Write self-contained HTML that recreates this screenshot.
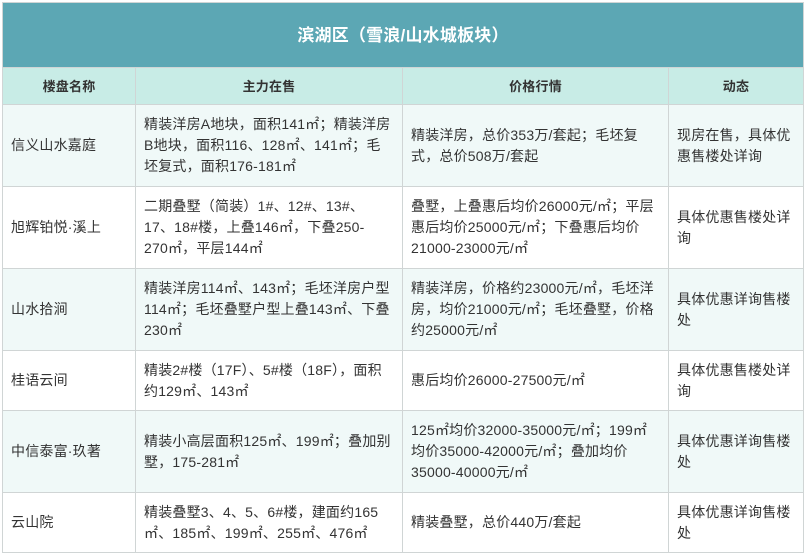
<!DOCTYPE html>
<html><head><meta charset="utf-8"><style>
body{margin:0;background:#fff;font-family:"Liberation Sans","Noto Sans CJK SC",sans-serif;}
table{position:absolute;left:2px;top:2px;width:801px;border-collapse:collapse;font-size:14px;color:#333;table-layout:fixed;}
td,th{border:1px solid #d0d5d5;padding:0 8px;line-height:21px;text-align:left;vertical-align:middle;letter-spacing:0.2px;white-space:nowrap;overflow:hidden;}
.title{background:#5ca7b4;color:#fff;font-size:17px;font-weight:bold;text-align:center;height:64px;padding:0;}
.hd th{background:#c8ece6;font-weight:bold;text-align:center;height:36px;color:#333;font-size:13px;}
tr.t td{background:#f0f9f8;}
</style></head><body>
<table>
<colgroup><col style="width:133px"><col style="width:267px"><col style="width:266px"><col style="width:135px"></colgroup>
<tr><td class="title" colspan="4">滨湖区（雪浪/山水城板块）</td></tr>
<tr class="hd"><th>楼盘名称</th><th>主力在售</th><th>价格行情</th><th>动态</th></tr>
<tr class="t" style="height:82px"><td>信义山水嘉庭</td><td>精装洋房A地块，面积141㎡；精装洋房<br>B地块，面积116、128㎡、141㎡；毛<br>坯复式，面积176-181㎡</td><td>精装洋房，总价353万/套起；毛坯复<br>式，总价508万/套起</td><td>现房在售，具体优<br>惠售楼处详询</td></tr>
<tr style="height:82px"><td>旭辉铂悦·溪上</td><td>二期叠墅（简装）1#、12#、13#、<br>17、18#楼，上叠146㎡，下叠250-<br>270㎡，平层144㎡</td><td>叠墅，上叠惠后均价26000元/㎡；平层<br>惠后均价25000元/㎡；下叠惠后均价<br>21000-23000元/㎡</td><td>具体优惠售楼处详<br>询</td></tr>
<tr class="t" style="height:82px"><td>山水拾涧</td><td>精装洋房114㎡、143㎡；毛坯洋房户型<br>114㎡；毛坯叠墅户型上叠143㎡、下叠<br>230㎡</td><td>精装洋房，价格约23000元/㎡，毛坯洋<br>房，均价21000元/㎡；毛坯叠墅，价格<br>约25000元/㎡</td><td>具体优惠详询售楼<br>处</td></tr>
<tr style="height:60px"><td>桂语云间</td><td>精装2#楼（17F）、5#楼（18F），面积<br>约129㎡、143㎡</td><td>惠后均价26000-27500元/㎡</td><td>具体优惠售楼处详<br>询</td></tr>
<tr class="t" style="height:82px"><td>中信泰富·玖著</td><td>精装小高层面积125㎡、199㎡；叠加别<br>墅，175-281㎡</td><td>125㎡均价32000-35000元/㎡；199㎡<br>均价35000-42000元/㎡；叠加均价<br>35000-40000元/㎡</td><td>具体优惠详询售楼<br>处</td></tr>
<tr style="height:60px"><td>云山院</td><td>精装叠墅3、4、5、6#楼，建面约165<br>㎡、185㎡、199㎡、255㎡、476㎡</td><td>精装叠墅，总价440万/套起</td><td>具体优惠详询售楼<br>处</td></tr>
</table>
</body></html>
